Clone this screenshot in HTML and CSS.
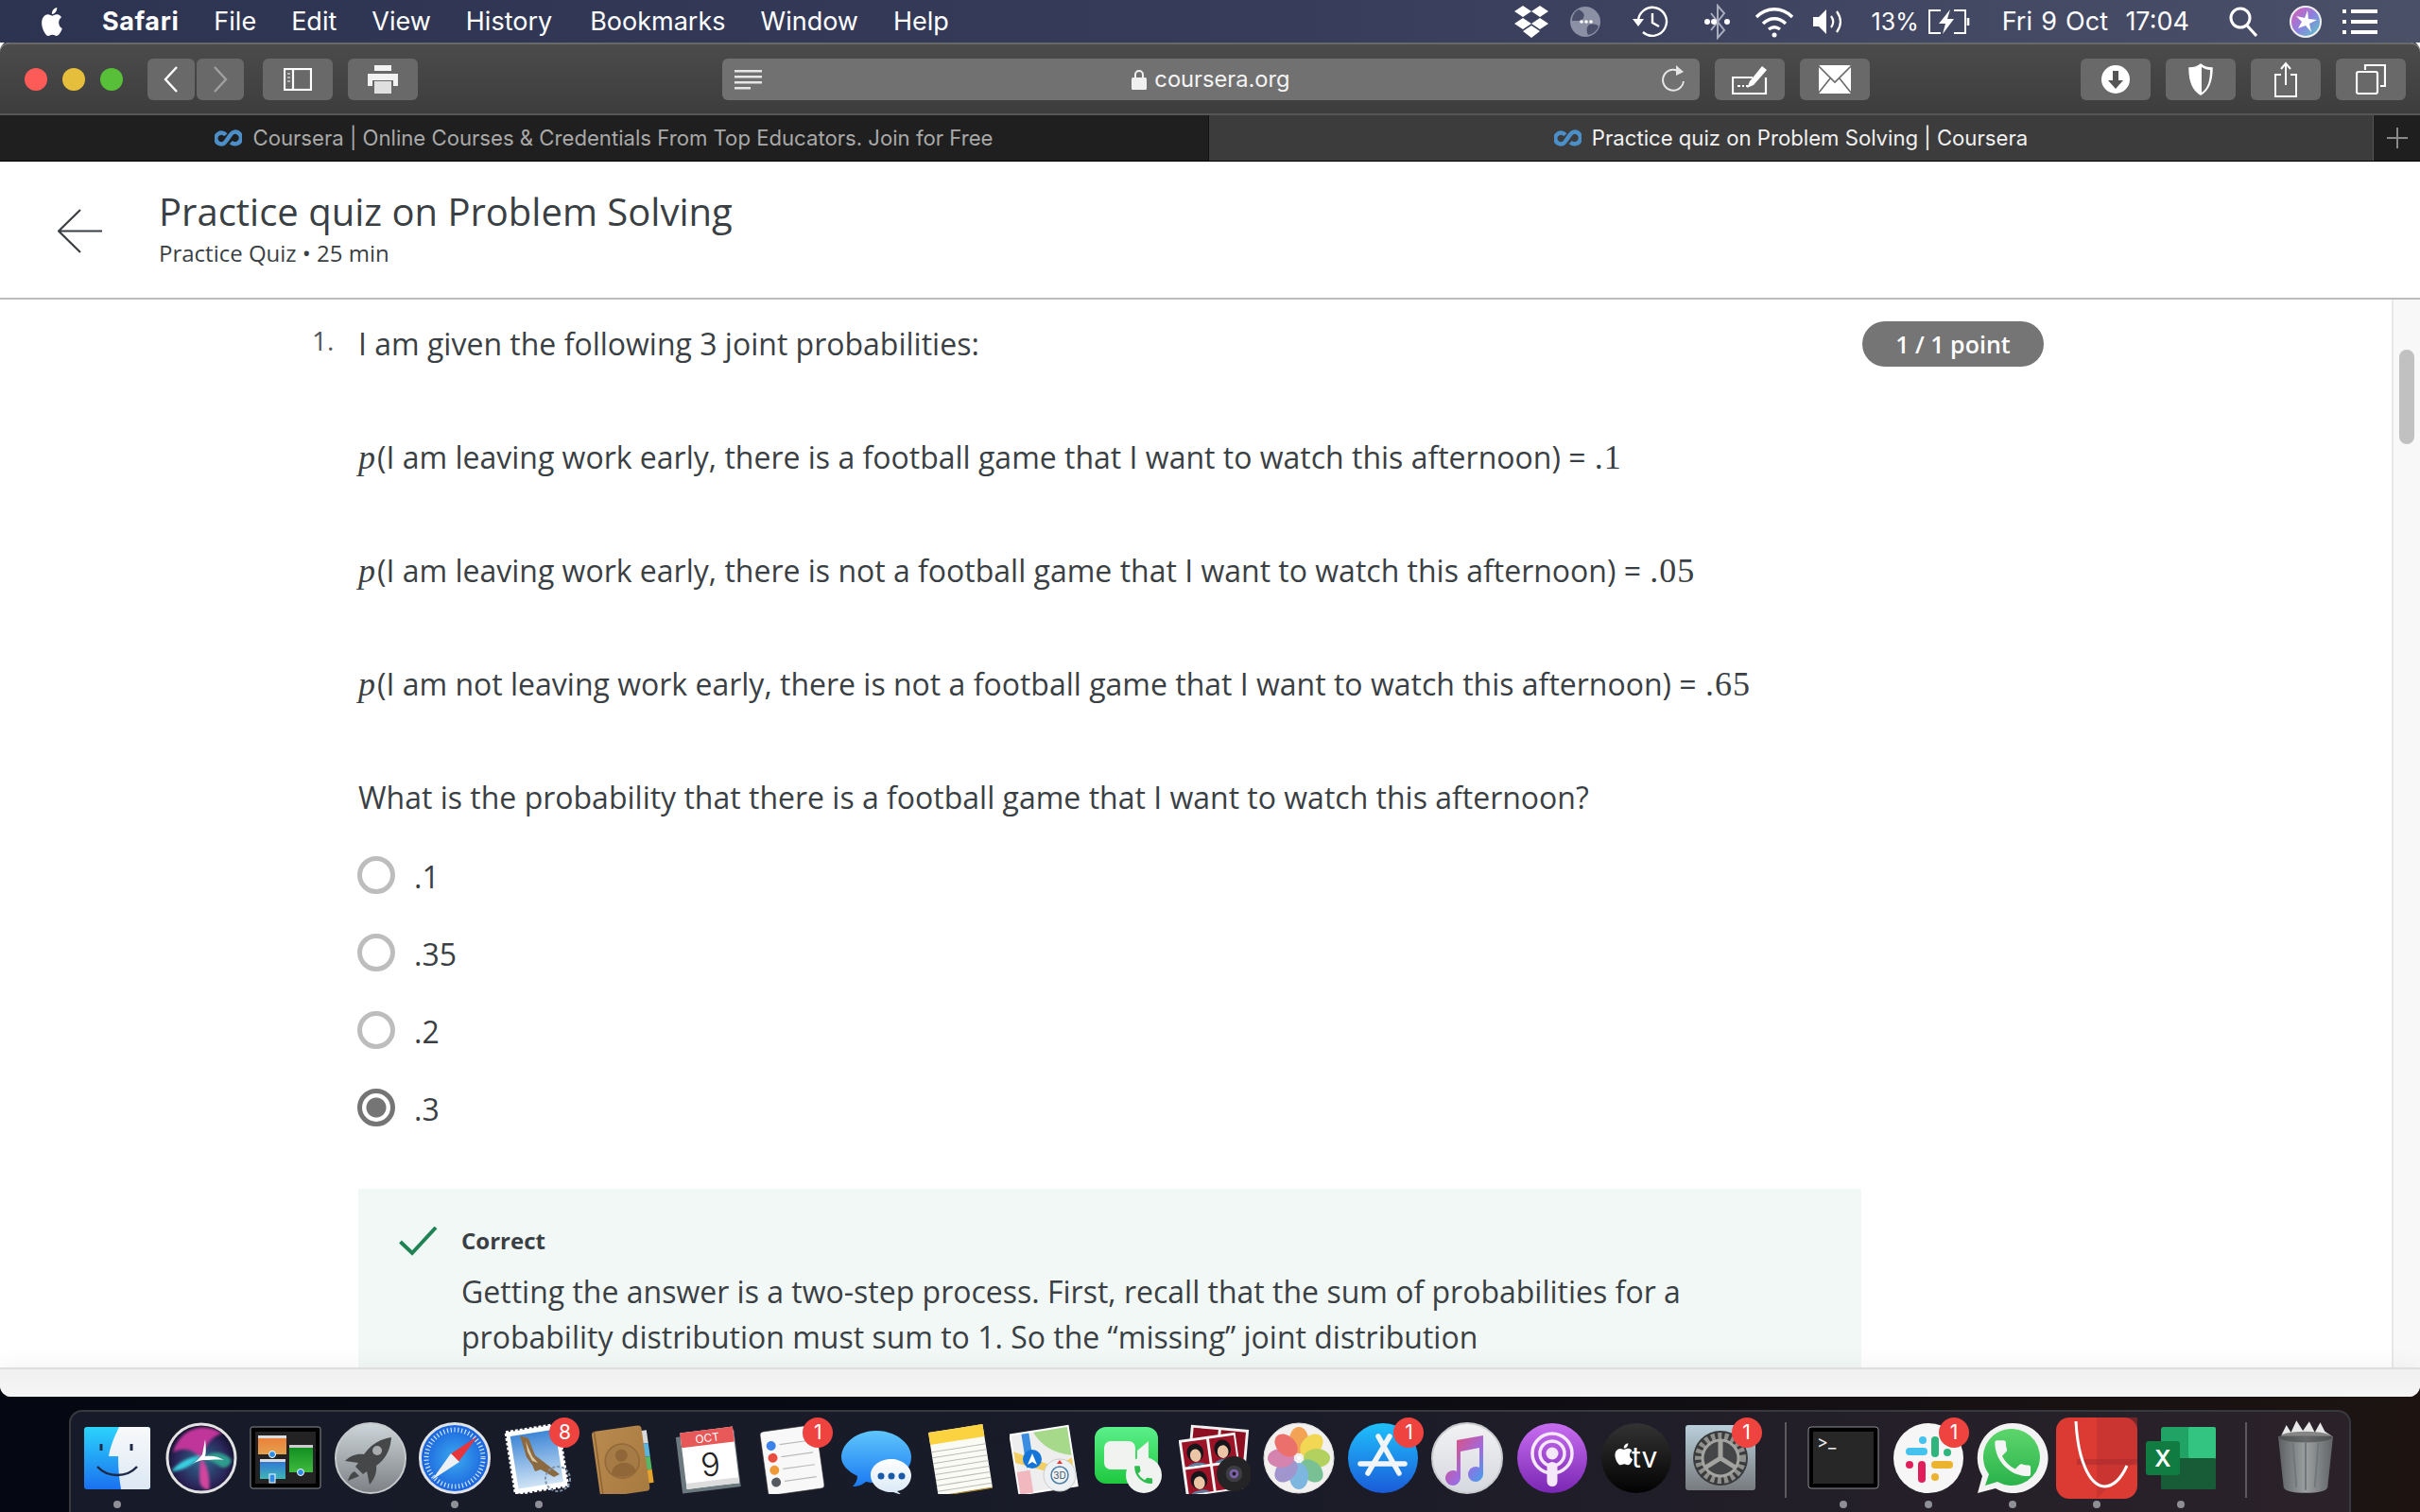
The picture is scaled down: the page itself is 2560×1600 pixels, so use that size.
FILE: index.html
```html
<!DOCTYPE html>
<html lang="en">
<head>
  <meta charset="UTF-8">
  <title>Practice quiz on Problem Solving | Coursera</title>
  <link rel="stylesheet" href="styles.css">
</head>
<body>
  <!-- mac menu bar -->
  <header class="menubar">
    <svg class="apple" viewBox="0 0 24 24" width="32" height="36" preserveAspectRatio="none"><path fill="#fff" d="M18.71 19.5c-.83 1.24-1.71 2.45-3.05 2.47-1.34.03-1.77-.79-3.29-.79-1.53 0-2 .77-3.27.82-1.31.05-2.3-1.32-3.14-2.53C4.25 17 2.94 12.45 4.7 9.39c.87-1.52 2.43-2.48 4.12-2.51 1.28-.02 2.5.87 3.29.87.78 0 2.26-1.07 3.81-.91.65.03 2.47.26 3.64 1.98-.09.06-2.17 1.28-2.15 3.81.03 3.02 2.65 4.03 2.68 4.04-.03.07-.42 1.44-1.38 2.83M13 3.5c.73-.83 1.94-1.46 2.94-1.5.13 1.17-.34 2.35-1.04 3.19-.69.85-1.83 1.51-2.95 1.42-.15-1.15.41-2.35 1.05-3.11z"/></svg>
    <nav class="menus">
      <b>Safari</b><span>File</span><span>Edit</span><span>View</span><span class="m-history">History</span><span>Bookmarks</span><span>Window</span><span>Help</span>
    </nav>
    <div class="status">
      <svg class="st-dropbox" viewBox="0 0 38 36" width="38" height="36"><path fill="#fff" d="M10 1l9 6-9 6-9-6zM28 1l9 6-9 6-9-6zM10 14l9 6-9 6-9-6zM28 14l9 6-9 6-9-6zM19 22l9 6-9 7-9-7z"/></svg>
      <svg class="st-globe" viewBox="0 0 32 32" width="32" height="32"><circle cx="16" cy="16" r="16" fill="#8b90a4"/><path fill="#4a506a" d="M9 3c5 3 7 5 5 9s-8 3-12 3c0-5 3-10 7-12zM20 19c6-1 9 0 10 2-2 5-6 8-11 9-2-4-2-8 1-11z"/><circle cx="12" cy="16" r="1.800" fill="#fff"/><circle cx="17" cy="16" r="1.800" fill="#fff"/><circle cx="22" cy="16" r="1.800" fill="#fff"/></svg>
      <svg class="st-time" viewBox="0 0 39 36" width="39" height="36" fill="none" stroke="#fff" stroke-width="2.4"><path d="M6 18a15 15 0 1 1 5 11"/><path d="M21 9v10l7 4"/><path fill="#fff" stroke="none" d="M0 15h12l-6 8z"/></svg>
      <svg class="st-bt" viewBox="0 0 27 38" width="27" height="38" fill="none" stroke="#a8acbc" stroke-width="2"><path d="M7 10l14 18-7 8V2l7 8L7 28"/><g fill="#fff" stroke="none"><circle cx="3" cy="19" r="3"/><circle cx="10" cy="19" r="3"/><circle cx="24" cy="19" r="3"/></g></svg>
      <svg class="st-wifi" viewBox="0 0 42 34" width="42" height="34" fill="none" stroke="#fff" stroke-width="3.4"><path d="M2 12c11-11 27-11 38 0"/><path d="M9 19c7-7 17-7 24 0"/><path d="M15 25c4-3 8-3 12 0"/><circle cx="21" cy="31" r="2.5" fill="#fff" stroke="none"/></svg>
      <svg class="st-vol" viewBox="0 0 34 30" width="34" height="30"><path fill="#fff" d="M0 10h6l8-8v26l-8-8H0z"/><path fill="none" stroke="#fff" stroke-width="2.2" d="M19 9c3 4 3 8 0 12M25 4c5 7 5 15 0 22"/></svg>
      <span class="st-pct">13%</span>
      <svg class="st-batt" viewBox="0 0 46 28" width="46" height="28" fill="none" stroke="#fff" stroke-width="2"><path d="M14 2H2v24h12M28 2h12v24H28"/><path d="M43 10v8" stroke-width="2.6"/><path fill="#fff" stroke="none" d="M24 1L12 16h7l-3 11 12-16h-7z"/></svg>
      <span class="st-date">Fri 9 Oct&nbsp; 17:04</span>
      <svg class="st-search" viewBox="0 0 30 32" width="30" height="32" fill="none" stroke="#fff" stroke-width="3"><circle cx="12" cy="12" r="10"/><path d="M19 20l10 11"/></svg>
      <svg class="st-siri" viewBox="0 0 34 34" width="34" height="34"><defs><linearGradient id="sb" x1="0" y1="0" x2="1" y2="1"><stop offset="0" stop-color="#e05bb0"/><stop offset=".5" stop-color="#8d7fe0"/><stop offset="1" stop-color="#53cdbf"/></linearGradient></defs><circle cx="17" cy="17" r="16" fill="url(#sb)" stroke="#eee" stroke-width="2"/><path fill="#fff" d="M19 5l1 9 9 1-8 4 2 9-6-7-8 3 4-7-6-6 9 2z"/></svg>
      <svg class="st-list" viewBox="0 0 37 26" width="37" height="26" fill="#fff"><path d="M0 0h4v4H0zM9 0h28v4H9zM0 11h4v4H0zM9 11h28v4H9zM0 22h4v4H0zM9 22h28v4H9z"/></svg>
    </div>
  </header>

  <div class="window">
    <div class="toolbar">
      <div class="lights"><i class="red"></i><i class="yellow"></i><i class="green"></i></div>
      <div class="btn nav-btn nav-back"><svg viewBox="0 0 16 28" width="16" height="28" fill="none" stroke="#fff" stroke-width="2.4"><path d="M14 1L2 14l12 13"/></svg></div>
      <div class="btn nav-btn nav-fwd"><svg viewBox="0 0 16 28" width="16" height="28" fill="none" stroke="#a0a0a0" stroke-width="2.4"><path d="M2 1l12 13L2 27"/></svg></div>
      <div class="btn btn-sidebar"><svg viewBox="0 0 30 24" width="30" height="24" fill="none" stroke="#fff" stroke-width="2.2"><rect x="1" y="1" width="28" height="22"/><path d="M10 1v22"/><path d="M4 6h3M4 10h3M4 14h3" stroke="#ccc" stroke-width="1.6"/></svg></div>
      <div class="btn btn-print"><svg viewBox="0 0 38 30" width="38" height="30"><path fill="#f2f2f2" d="M10 0h18v6H10zM3 9h32v13h-5v-6H8v6H3z"/><path fill="#e0e0e0" d="M10 17h18v13H10z"/></svg></div>
      <div class="address">
        <svg viewBox="0 0 30 22" width="30" height="22" fill="#e6e6e6"><path d="M1 1h29v2.4H1zM1 7h29v2.4H1zM1 13h29v2.4H1zM1 19h17v2.4H1z"/></svg>
        <div class="addr-url">
          <svg viewBox="0 0 16 22" width="16" height="22"><path fill="none" stroke="#f0f0f0" stroke-width="2" d="M4 9V6a4 4 0 0 1 8 0v3"/><rect y="9" width="16" height="13" rx="1.5" fill="#f0f0f0"/></svg>
          <span>coursera.org</span>
        </div>
        <svg viewBox="0 0 30 30" width="30" height="30" fill="none" stroke="#e6e6e6" stroke-width="2"><path d="M22 8a11 11 0 1 0 3 9"/><path fill="#e6e6e6" stroke="none" d="M17 0l8 7-8 4z"/></svg>
      </div>
      <div class="btn btn-compose"><svg viewBox="0 0 38 32" width="38" height="32" fill="none" stroke="#fff" stroke-width="2.2"><path d="M22 14H1v17h35V14"/><path d="M6 23h3M11 23h2M15 23h2" stroke-width="2"/><path fill="#fff" stroke="none" d="M32 2l5 4-14 16-7 3 3-7z"/></svg></div>
      <div class="btn btn-mail"><svg viewBox="0 0 34 30" width="34" height="30"><rect width="34" height="30" rx="1.5" fill="#fff"/><path fill="none" stroke="#6a6a6a" stroke-width="1.6" d="M0 1l17 17L34 1M0 29l12-15M34 29L22 14"/></svg></div>
      <div class="btn btn-dl"><svg viewBox="0 0 30 30" width="30" height="30"><circle cx="15" cy="15" r="15" fill="#fff"/><path fill="#555" d="M12 6h6v10h5l-8 9-8-9h5z"/></svg></div>
      <div class="btn"><svg viewBox="0 0 26 34" width="26" height="34"><path fill="#fff" stroke="#fff" stroke-width="1.5" d="M13 1c4 3 8 4 12 4 0 13-3 23-12 28C4 28 1 18 1 5c4 0 8-1 12-4z"/><path fill="#6a6a6a" d="M14 4c3 2 6 3 9 3 0 11-2 19-9 24z"/></svg></div>
      <div class="btn"><svg viewBox="0 0 24 38" width="24" height="38" fill="none" stroke="#fff" stroke-width="2"><path d="M7 14H1v23h22V14h-6"/><path d="M12 25V2M7 8l5-6 5 6"/></svg></div>
      <div class="btn"><svg viewBox="0 0 32 32" width="32" height="32" fill="none" stroke="#fff" stroke-width="2.2"><path d="M10 6V1h21v22h-5"/><rect x="1" y="8" width="22" height="23" rx="2"/></svg></div>
    </div>

    <div class="tabs">
      <div class="tab">
        <svg class="cs-logo" viewBox="0 0 32 20" width="29" height="20"><path fill="none" stroke="#4b8ec8" stroke-width="5" d="M13 6.500A6.500 6.500 0 1 0 9 17C14 17 18 3 23 3a7 7 0 1 1-4 12"/></svg>
        <span>Coursera | Online Courses &amp; Credentials From Top Educators. Join for Free</span>
      </div>
      <div class="tab tab-active">
        <svg class="cs-logo" viewBox="0 0 32 20" width="29" height="20"><path fill="none" stroke="#4b8ec8" stroke-width="5" d="M13 6.500A6.500 6.500 0 1 0 9 17C14 17 18 3 23 3a7 7 0 1 1-4 12"/></svg>
        <span>Practice quiz on Problem Solving | Coursera</span>
      </div>
      <div class="tab-add"><svg viewBox="0 0 24 24" width="24" height="24" stroke="#8a8a8a" stroke-width="2"><path d="M12 1v22M1 12h22"/></svg></div>
    </div>

    <div class="page-head">
      <svg class="back-arrow" viewBox="0 0 47 47" width="47" height="47" fill="none" stroke="#3a3f44" stroke-width="2.2"><path d="M24 1L1 23.500 24 46M1 23.500h46"/></svg>
      <div>
        <h1>Practice quiz on Problem Solving</h1>
        <p class="sub">Practice Quiz • 25 min</p>
      </div>
    </div>

    <main class="page-body">
      <div class="quiz">
        <div class="q-head">
          <span class="q-num">1.</span>
          <p class="line">I am given the following 3 joint probabilities:</p>
          <span class="pill">1 / 1 point</span>
        </div>
        <div class="q-body">
          <p class="line"><i class="math">p</i>(I am leaving work early, there is a football game that I want to watch this afternoon) = <span class="num">.1</span></p>
          <p class="line"><i class="math">p</i>(I am leaving work early, there is not a football game that I want to watch this afternoon) = <span class="num">.05</span></p>
          <p class="line"><i class="math">p</i>(I am not leaving work early, there is not a football game that I want to watch this afternoon) = <span class="num">.65</span></p>
          <p class="line">What is the probability that there is a football game that I want to watch this afternoon?</p>

          <ul class="options">
            <li><span class="radio"></span>.1</li>
            <li><span class="radio"></span>.35</li>
            <li><span class="radio"></span>.2</li>
            <li><span class="radio checked"></span>.3</li>
          </ul>

          <div class="feedback">
            <svg class="check" viewBox="0 0 41 31" width="41" height="31" fill="none" stroke="#1f8354" stroke-width="4"><path d="M1.500 16L14 28 39 1"/></svg>
            <div>
              <h3>Correct</h3>
              <p>Getting the answer is a two-step process. First, recall that the sum of probabilities for a probability distribution must sum to 1. So the “missing” joint distribution</p>
            </div>
          </div>
        </div>
      </div>
      <div class="scrollbar"><div class="thumb"></div></div>
    </main>
    <div class="win-foot"></div>
  </div>

  <!-- dock -->
  <footer class="dock">
    <div class="dock-item on">
      <svg viewBox="0 0 76 76"><defs><linearGradient id="fa" x1="0" y1="0" x2="0" y2="1"><stop offset="0" stop-color="#2bd3fc"/><stop offset="1" stop-color="#1b70ef"/></linearGradient><linearGradient id="fb" x1="0" y1="0" x2="0" y2="1"><stop offset="0" stop-color="#f8f9fa"/><stop offset="1" stop-color="#dce8f4"/></linearGradient></defs><rect x="3" y="5" width="70" height="66" rx="3" fill="url(#fa)"/><path fill="url(#fb)" d="M40 5C34 17 30 28 29 36h10c0 12 1 24 3 35h28a3 3 0 0 0 3-3V8a3 3 0 0 0-3-3z"/><path fill="none" stroke="#1d2a48" stroke-width="3" d="M21 23v7M53 23v7"/><path fill="none" stroke="#1d2a48" stroke-width="2.500" d="M17 47c11 12 31 12 42 0"/></svg>
    </div>
    <div class="dock-item">
      <svg viewBox="0 0 76 76"><defs><radialGradient id="sa" cx=".5" cy=".55" r=".55"><stop offset="0" stop-color="#2e6a8e"/><stop offset=".7" stop-color="#2a2458"/><stop offset="1" stop-color="#0c0d20"/></radialGradient><filter id="sblur"><feGaussianBlur stdDeviation="1.600"/></filter><clipPath id="sclip"><circle cx="38" cy="38" r="34"/></clipPath></defs><circle cx="38" cy="38" r="36" fill="url(#sa)" stroke="#e2e2e2" stroke-width="3"/><g clip-path="url(#sclip)" filter="url(#sblur)"><path fill="#c0349a" d="M8 32C14 8 40 -2 60 12c-10 2-18 12-22 26C28 28 18 26 8 32z"/><path fill="#2d9c8e" d="M40 38c8-8 22-8 30 2-2 8-8 9-12 7-6-4-12-7-18-9z"/><path fill="#d1449e" d="M38 38c6 6 10 22 8 34-8-2-10-6-10-14 0-8 0-14 2-20z"/><path fill="#38d0e0" d="M6 52c8-10 20-16 32-16-6 6-18 16-32 16z"/></g><path fill="#fff" d="M42 18c1 8 1 14 0 18 6-1 14 0 20 4-7-1-14 0-20 0-4 0-10 1-16 6 4-3 10-7 13-12 1-5 2-10 3-16z"/></svg>
    </div>
    <div class="dock-item">
      <svg viewBox="0 0 76 76"><defs><linearGradient id="ma" x1="0" y1="0" x2="0" y2="1"><stop offset="0" stop-color="#ec7b3a"/><stop offset="1" stop-color="#e3a14b"/></linearGradient><linearGradient id="mb" x1="0" y1="0" x2="0" y2="1"><stop offset="0" stop-color="#0d8a1e"/><stop offset="1" stop-color="#3fbb3f"/></linearGradient><linearGradient id="mc" x1="0" y1="0" x2="0" y2="1"><stop offset="0" stop-color="#2f6edb"/><stop offset="1" stop-color="#3fb6b5"/></linearGradient></defs><rect x="1" y="5" width="74" height="65" rx="2" fill="#000" stroke="#8a8f96"/><rect x="6" y="10" width="64" height="55" fill="#232323"/><rect x="9" y="14" width="30" height="20" fill="url(#ma)"/><rect x="9" y="14" width="30" height="3" fill="#ddd"/><rect x="42" y="24" width="25" height="29" fill="url(#mb)"/><rect x="42" y="24" width="25" height="3" fill="#ccc"/><rect x="11" y="39" width="27" height="21" fill="url(#mc)"/><rect x="11" y="39" width="27" height="3" fill="#ddd"/><circle cx="24" cy="34" r="3.500" fill="#2f8de4" stroke="#fff"/><circle cx="54" cy="53" r="3.500" fill="#2f8de4" stroke="#fff"/><rect x="21" y="55" width="6" height="9" fill="#2f8de4" stroke="#fff"/></svg>
    </div>
    <div class="dock-item">
      <svg viewBox="0 0 76 76"><defs><linearGradient id="la" x1="0" y1="0" x2="0" y2="1"><stop offset="0" stop-color="#cdd6da"/><stop offset="1" stop-color="#7d8084"/></linearGradient></defs><circle cx="38" cy="38" r="37" fill="url(#la)" stroke="#c6c8ca" stroke-width="2"/><path fill="#454749" d="M60 16c-13 2-22 8-29 18-7-1-14 1-20 7l14 2-3 4 8 8 4-3 3 14c5-6 8-13 7-20 10-7 15-17 16-30z"/><path fill="#454749" d="M21 52l5 5-12 5c1-4 3-8 7-10z"/><circle cx="45" cy="30" r="5" fill="#a9acae"/></svg>
    </div>
    <div class="dock-item on">
      <svg viewBox="0 0 76 76"><defs><radialGradient id="sf" cx=".5" cy=".5" r=".5"><stop offset="0" stop-color="#3ba9f0"/><stop offset="1" stop-color="#1a61dc"/></radialGradient></defs><circle cx="38" cy="38" r="36.500" fill="url(#sf)" stroke="#e0e3e6" stroke-width="3"/><circle cx="38" cy="38" r="30" fill="none" stroke="#cfe6fb" stroke-width="5" stroke-dasharray="1.200 2.600"/><path fill="#e8353b" d="M62 15L33 34l9 8z"/><path fill="#eef1f3" d="M14 61l29-19-9-9z"/></svg>
    </div>
    <div class="dock-item on">
      <svg viewBox="0 0 76 76"><defs><linearGradient id="ms" x1="0" y1="0" x2="0" y2="1"><stop offset="0" stop-color="#3f87d6"/><stop offset="1" stop-color="#cfe3f5"/></linearGradient></defs><g transform="rotate(-9 36 40)"><rect x="8" y="6" width="56" height="66" fill="#fff" stroke="#fff" stroke-width="3" stroke-dasharray="3 2"/><rect x="12" y="11" width="48" height="56" fill="url(#ms)"/></g><path fill="#8b6a42" d="M18 14l9 3 7 18 26 20-6 3-14-8-6 2-3-7-6-8z"/><path fill="#d8c6a4" d="M24 20l7 16 6 7-6-2-5-10z"/><circle cx="58" cy="60" r="13" fill="none" stroke="#7e93a9" stroke-width="2" stroke-dasharray="3 2"/></svg>
      <span class="badge">8</span>
    </div>
    <div class="dock-item">
      <svg viewBox="0 0 76 76"><defs><linearGradient id="ca" x1="0" y1="0" x2="1" y2="1"><stop offset="0" stop-color="#b98a50"/><stop offset="1" stop-color="#a77a40"/></linearGradient></defs><g transform="rotate(-8 38 40)"><rect x="60" y="12" width="7" height="14" fill="#d8d8d8"/><rect x="60" y="26" width="7" height="14" fill="#5bb4dd"/><rect x="60" y="40" width="7" height="14" fill="#57b566"/><rect x="60" y="54" width="7" height="14" fill="#e5a32c"/><rect x="9" y="6" width="53" height="70" rx="4" fill="url(#ca)"/><path stroke="#8d6431" stroke-width="1.500" d="M12 6v70"/><circle cx="37" cy="41" r="18" fill="#a67b45" stroke="#93693a" stroke-width="1.500"/><circle cx="37" cy="35" r="6.500" fill="#8f6738"/><path fill="#8f6738" d="M24 53c2-8 8-10 13-10s11 2 13 10c-7 6-19 6-26 0z"/></g></svg>
    </div>
    <div class="dock-item">
      <svg viewBox="0 0 76 76"><g transform="rotate(-7 38 40)"><rect x="7" y="12" width="62" height="60" fill="#6c7a80"/><rect x="12" y="8" width="56" height="60" fill="#fff"/><rect x="12" y="8" width="56" height="16" fill="#e75858"/><rect x="12" y="62" width="56" height="6" fill="#ddd"/><text x="40" y="21" class="cal-mon">OCT</text><text x="40" y="57" class="cal-day">9</text></g></svg>
    </div>
    <div class="dock-item">
      <svg viewBox="0 0 76 76"><g transform="rotate(-8 38 40)"><rect x="8" y="6" width="60" height="68" rx="4" fill="#f8f8f8" stroke="#333" stroke-width=".6"/><circle cx="18" cy="22" r="5" fill="#3b82ea"/><circle cx="18" cy="35" r="5" fill="#e84e40"/><circle cx="18" cy="48" r="5" fill="#ef9a3a"/><circle cx="18" cy="61" r="5" fill="#555a60"/><path stroke="#bbb" stroke-width="1.200" d="M27 22h34M27 35h34M27 48h34M27 61h34"/></g></svg>
      <span class="badge">1</span>
    </div>
    <div class="dock-item">
      <svg viewBox="0 0 76 76"><defs><linearGradient id="ga" x1="0" y1="0" x2="0" y2="1"><stop offset="0" stop-color="#5fc6fb"/><stop offset="1" stop-color="#1a79f2"/></linearGradient><linearGradient id="gb" x1="0" y1="0" x2="0" y2="1"><stop offset="0" stop-color="#fff"/><stop offset="1" stop-color="#d8e8f6"/></linearGradient></defs><path fill="url(#ga)" d="M38 9c20 0 37 13 37 28S58 64 38 64c-4 0-7 0-11-1-3 3-9 5-14 5 3-3 5-7 5-11C8 52 1 45 1 37 1 22 18 9 38 9z"/><path fill="url(#gb)" d="M54 39c11 0 21 8 21 17S68 72 60 73l5 4-9-3c-1 0-1 0-2 0-12 0-22-8-22-18s10-17 22-17z"/><circle cx="43" cy="57" r="3.500" fill="#1a5aa6"/><circle cx="54" cy="57" r="3.500" fill="#1a5aa6"/><circle cx="65" cy="57" r="3.500" fill="#1a5aa6"/></svg>
    </div>
    <div class="dock-item">
      <svg viewBox="0 0 76 76"><g transform="rotate(-9 38 40)"><rect x="8" y="6" width="58" height="68" fill="#fbfbf6"/><rect x="8" y="6" width="58" height="13" fill="#fbd23f"/><path stroke="#bcbcb5" stroke-width="1" d="M8 27h58M8 33h58M8 39h58M8 45h58M8 51h58M8 57h58M8 63h58M8 69h58"/><path stroke="#b08a30" stroke-width="1.200" d="M8 74h58"/></g></svg>
    </div>
    <div class="dock-item">
      <svg viewBox="0 0 76 76"><g transform="rotate(-9 38 40)"><rect x="5" y="8" width="62" height="64" fill="#eee" stroke="#fff" stroke-width="2"/><path fill="#a6d98a" d="M30 9h36v30C52 36 36 26 30 9z"/><path fill="#f2b8c0" d="M6 48h14v24H6z"/><path fill="#f3cf63" d="M6 26l40 22 20-6v10l-20 4L6 38z"/><rect x="17" y="9" width="8" height="36" fill="#3a8de0"/></g><circle cx="24" cy="39" r="10" fill="#1675d8"/><path fill="#fff" d="M24 33l5 12-5-3-5 3z"/><circle cx="53" cy="56" r="17" fill="#eef1f3" stroke="#ccc"/><circle cx="53" cy="56" r="9" fill="none" stroke="#4b7fa5" stroke-width="1.500"/><text x="53" y="60" class="map-3d">3D</text><path fill="#e33" d="M53 40l3 4h-6z"/></svg>
    </div>
    <div class="dock-item">
      <svg viewBox="0 0 76 76"><defs><linearGradient id="ft" x1="0" y1="0" x2="0" y2="1"><stop offset="0" stop-color="#5bf08a"/><stop offset="1" stop-color="#1fc83f"/></linearGradient></defs><rect x="1" y="5" width="67" height="60" rx="12" fill="url(#ft)"/><rect x="11" y="20" width="33" height="30" rx="7" fill="#f1f3f0"/><path fill="#f1f3f0" d="M46 30l12-10v30L46 40z"/><circle cx="53" cy="56" r="19" fill="#f0f3ef"/><path fill="#2ebd4d" transform="translate(40 43) scale(1.050)" d="M6.620 10.790c1.440 2.830 3.760 5.140 6.590 6.590l2.200-2.200c.27-.27.67-.36 1.020-.24 1.120.37 2.330.57 3.570.57.55 0 1 .45 1 1V20c0 .55-.45 1-1 1-9.390 0-17-7.610-17-17 0-.55.45-1 1-1h3.500c.55 0 1 .45 1 1 0 1.250.2 2.450.57 3.570.11.35.03.74-.25 1.020l-2.200 2.200z"/></svg>
    </div>
    <div class="dock-item">
      <svg viewBox="0 0 78 76"><g transform="rotate(5 50 30)"><rect x="11" y="5" width="63" height="45" fill="#f2f2f2"/><rect x="14" y="8" width="27" height="35" fill="#8f0f22"/><rect x="44" y="8" width="27" height="35" fill="#8f0f22"/></g><g transform="rotate(-8 34 40)"><rect x="3" y="14" width="62" height="62" fill="#f5f5f5"/><rect x="6" y="17" width="27" height="27" fill="#9c1327"/><rect x="36" y="17" width="27" height="27" fill="#9c1327"/><rect x="6" y="47" width="27" height="27" fill="#9c1327"/><rect x="36" y="47" width="27" height="27" fill="#9c1327"/><ellipse cx="19" cy="30" rx="9" ry="10" fill="#16161a"/><ellipse cx="19" cy="33" rx="6" ry="7" fill="#ecc4a6"/><path fill="#5a7fa0" d="M9 44c2-4 18-4 20 0z"/><ellipse cx="49" cy="30" rx="9" ry="10" fill="#16161a"/><ellipse cx="49" cy="33" rx="6" ry="7" fill="#ecc4a6"/><path fill="#5a7fa0" d="M39 44c2-4 18-4 20 0z"/><ellipse cx="19" cy="60" rx="9" ry="10" fill="#16161a"/><ellipse cx="19" cy="63" rx="6" ry="7" fill="#ecc4a6"/><path fill="#5a7fa0" d="M9 74c2-4 18-4 20 0z"/></g><circle cx="60" cy="55" r="19" fill="#242426"/><circle cx="60" cy="55" r="9" fill="#3d3d44"/><circle cx="60" cy="55" r="5" fill="#7b62a6"/><circle cx="60" cy="55" r="2" fill="#1c1c22"/></svg>
    </div>
    <div class="dock-item">
      <svg viewBox="0 0 76 76"><circle cx="38" cy="38" r="37" fill="#f2f1ef" stroke="#ddd"/><g opacity=".85"><ellipse cx="38" cy="19" rx="10" ry="14" fill="#f3963a"/><ellipse cx="38" cy="19" rx="10" ry="14" fill="#f3d33a" transform="rotate(45 38 38)"/><ellipse cx="38" cy="19" rx="10" ry="14" fill="#a9cc46" transform="rotate(90 38 38)"/><ellipse cx="38" cy="19" rx="10" ry="14" fill="#64b985" transform="rotate(135 38 38)"/><ellipse cx="38" cy="19" rx="10" ry="14" fill="#69aede" transform="rotate(180 38 38)"/><ellipse cx="38" cy="19" rx="10" ry="14" fill="#9286c8" transform="rotate(225 38 38)"/><ellipse cx="38" cy="19" rx="10" ry="14" fill="#cf72a4" transform="rotate(270 38 38)"/><ellipse cx="38" cy="19" rx="10" ry="14" fill="#ea5a56" transform="rotate(315 38 38)"/></g><circle cx="38" cy="38" r="2" fill="#fff"/></svg>
    </div>
    <div class="dock-item">
      <svg viewBox="0 0 76 76"><defs><linearGradient id="ap" x1="0" y1="0" x2="0" y2="1"><stop offset="0" stop-color="#1fc0fb"/><stop offset="1" stop-color="#1a5bd8"/></linearGradient></defs><circle cx="38" cy="38" r="37" fill="url(#ap)"/><g stroke="#f2f5f8" stroke-width="5.500" stroke-linecap="round" fill="none"><path d="M45 15L22 54"/><path d="M33 15l22 39"/><path d="M14 44h47"/></g></svg>
      <span class="badge">1</span>
    </div>
    <div class="dock-item">
      <svg viewBox="0 0 76 76"><defs><linearGradient id="mu" x1="0" y1="0" x2="0" y2="1"><stop offset="0" stop-color="#f2f2f4"/><stop offset="1" stop-color="#d5d8de"/></linearGradient><linearGradient id="mn" x1="0" y1="0" x2="1" y2="1"><stop offset="0" stop-color="#f2485f"/><stop offset=".6" stop-color="#9f6ae0"/><stop offset="1" stop-color="#36a8ee"/></linearGradient></defs><circle cx="38" cy="38" r="37" fill="url(#mu)" stroke="#c8cacd" stroke-width="2"/><path fill="url(#mn)" d="M27 19l28-5v41a8 8 0 1 1-4-7V27l-20 4v28a8 8 0 1 1-4-7z"/></svg>
    </div>
    <div class="dock-item">
      <svg viewBox="0 0 76 76"><defs><linearGradient id="po" x1="0" y1="0" x2="0" y2="1"><stop offset="0" stop-color="#c86df0"/><stop offset="1" stop-color="#7a27b4"/></linearGradient></defs><circle cx="38" cy="38" r="37" fill="url(#po)"/><g fill="none" stroke="#f4e8fa" stroke-width="3.500"><circle cx="38" cy="33" r="21"/><circle cx="38" cy="33" r="13"/></g><circle cx="38" cy="33" r="6.500" fill="#f4e8fa"/><rect x="32.500" y="42" width="11" height="26" rx="5.500" fill="#f4e8fa"/></svg>
    </div>
    <div class="dock-item">
      <svg viewBox="0 0 76 76"><defs><linearGradient id="tv" x1="0" y1="0" x2="0" y2="1"><stop offset="0" stop-color="#333"/><stop offset="1" stop-color="#020202"/></linearGradient></defs><circle cx="38" cy="38" r="37" fill="url(#tv)"/><path fill="#fff" transform="translate(11 20) scale(1.150)" d="M18.710 19.500c-.83 1.240-1.710 2.450-3.050 2.470-1.340.03-1.770-.79-3.290-.79-1.530 0-2 .77-3.270.82-1.310.05-2.300-1.320-3.140-2.530C4.250 17 2.940 12.450 4.700 9.390c.87-1.520 2.430-2.480 4.120-2.510 1.280-.02 2.500.87 3.290.87.78 0 2.260-1.070 3.810-.91.65.03 2.470.26 3.640 1.980-.09.06-2.170 1.280-2.150 3.810.03 3.020 2.650 4.030 2.680 4.040-.03.07-.42 1.440-1.380 2.830M13 3.500c.73-.83 1.940-1.460 2.940-1.500.13 1.170-.34 2.350-1.040 3.190-.69.85-1.830 1.510-2.950 1.420-.15-1.150.41-2.350 1.050-3.110z"/><text x="33" y="48" class="tv-text">tv</text></svg>
    </div>
    <div class="dock-item">
      <svg viewBox="0 0 76 76"><defs><linearGradient id="sy" x1="0" y1="0" x2="0" y2="1"><stop offset="0" stop-color="#b9cfdb"/><stop offset="1" stop-color="#777b7e"/></linearGradient></defs><rect x="1" y="3" width="74" height="69" rx="3" fill="url(#sy)"/><circle cx="38" cy="38" r="29" fill="#3a3b3d"/><circle cx="38" cy="38" r="23" fill="none" stroke="#8f8f8c" stroke-width="8" stroke-dasharray="4 3"/><circle cx="38" cy="38" r="19" fill="#444547" stroke="#a3a3a0" stroke-width="3"/><path stroke="#a3a3a0" stroke-width="5" d="M38 38V19M38 38L22 48M38 38l16 10"/></svg>
      <span class="badge">1</span>
    </div>
    <div class="dock-sep"></div>
    <div class="dock-item on">
      <svg viewBox="0 0 76 76"><rect x="1" y="5" width="74" height="65" rx="3" fill="#000" stroke="#8c9094"/><rect x="6" y="10" width="64" height="55" fill="#272727"/><text x="10" y="27" class="term-text">&gt;_</text></svg>
    </div>
    <div class="dock-item on">
      <svg viewBox="0 0 76 76"><circle cx="38" cy="38" r="37" fill="#f6f6f6"/><g stroke-width="8" stroke-linecap="round"><path stroke="#45c3ee" d="M18 31h15"/><path stroke="#45c3ee" d="M32 19h0"/><path stroke="#2eb57e" d="M45 19v14"/><path stroke="#2eb57e" d="M58 32h0"/><path stroke="#ecb32e" d="M45 45h15"/><path stroke="#ecb32e" d="M45 58h0"/><path stroke="#e01e5a" d="M31 45v15"/><path stroke="#e01e5a" d="M18 45h0"/></g></svg>
      <span class="badge">1</span>
    </div>
    <div class="dock-item on">
      <svg viewBox="0 0 76 76"><defs><linearGradient id="wa" x1="0" y1="0" x2="0" y2="1"><stop offset="0" stop-color="#5dd66c"/><stop offset="1" stop-color="#2ab24b"/></linearGradient></defs><path fill="#f3f3f3" d="M38 1a37 37 0 1 1-18 69L1 75l5-18A37 37 0 0 1 38 1z"/><path fill="url(#wa)" d="M38 7a30 30 0 1 1-16 56L9 67l4-12A30 30 0 0 1 38 7z"/><path fill="#f5f5f5" transform="translate(13 13) scale(2.100)" d="M6.620 10.790c1.440 2.830 3.760 5.140 6.590 6.590l2.200-2.200c.27-.27.67-.36 1.020-.24 1.120.37 2.330.57 3.570.57.55 0 1 .45 1 1V20c0 .55-.45 1-1 1-9.390 0-17-7.610-17-17 0-.55.45-1 1-1h3.500c.55 0 1 .45 1 1 0 1.250.2 2.450.57 3.570.11.35.03.74-.25 1.020l-2.200 2.200z"/></svg>
    </div>
    <div class="dock-item on">
      <svg class="big" viewBox="0 0 86 86"><rect width="86" height="86" rx="14" fill="#dc3b33"/><path fill="#b72d2f" d="M43 0l43 0v44L43 86z" opacity=".5"/><path fill="#a32a2c" d="M22 44h64v6H22z" opacity=".5"/><path fill="none" stroke="#fff" stroke-width="3" d="M21 4c2 40 14 68 30 69 10 0 18-9 24-22"/></svg>
    </div>
    <div class="dock-item on">
      <svg viewBox="0 0 76 76"><rect x="17" y="5" width="58" height="66" rx="3" fill="#21a366"/><rect x="46" y="5" width="29" height="33" fill="#33c481" rx="2"/><rect x="17" y="38" width="58" height="33" fill="#185c37" rx="2"/><rect x="1" y="20" width="36" height="36" rx="3" fill="#107c41"/><text x="19" y="47" class="xl-text">X</text></svg>
    </div>
    <div class="dock-sep dock-sep-end"></div>
    <div class="dock-item">
      <svg class="trash" viewBox="0 0 64 80"><defs><linearGradient id="tr" x1="0" y1="0" x2="1" y2="0"><stop offset="0" stop-color="#5c6062"/><stop offset=".5" stop-color="#9ca0a1"/><stop offset="1" stop-color="#606466"/></linearGradient></defs><path fill="url(#tr)" d="M2 18h60l-6 56c-1 4-10 6-24 6S9 78 8 74z"/><path fill="#e8e8e8" d="M5 18l6-12 5 8 6-13 7 11 7-10 6 12 6-11 5 10 8 5H5z"/><ellipse cx="32" cy="19" rx="29" ry="6" fill="#444" opacity=".6"/><path stroke="#72777a" stroke-width="2" d="M18 24l4 50M32 25v52M46 24l-4 50"/></svg>
    </div>
  </footer>
</body>
</html>
```

FILE: styles.css
```css
* {
  box-sizing: border-box;
}
html, body {
  margin: 0;
  padding: 0;
}
body {
  width: 2560px;
  height: 1600px;
  overflow: hidden;
  font-family: "Open Sans", Arial, sans-serif;
  background: linear-gradient(90deg, #050812, #0a0b14 50%, #1d1412);
}
p, h1, h3, ul {
  margin: 0;
  padding: 0;
}

/* menu bar */
.menubar {
  height: 45px;
  display: flex;
  align-items: center;
  background: linear-gradient(90deg, #2d3452, #353b59 50%, #4b5069);
  color: #fff;
  font-family: Inter, Arial, sans-serif;
  font-size: 27px;
  padding-right: 45px;
}
.apple {
  margin-left: 39px;
}
.menus {
  display: flex;
  gap: 37px;
  margin-left: 37px;
}
.menus b {
  font-weight: 700;
  letter-spacing: .6px;
}
.m-history {
  margin-right: 3px;
}
.status {
  display: flex;
  align-items: center;
  margin-left: auto;
}
.st-globe { margin-left: 22px; }
.st-time { margin-left: 34px; }
.st-bt { margin-left: 37px; }
.st-wifi { margin-left: 26px; }
.st-vol { margin-left: 20px; }
.st-pct { margin-left: 28px; font-size: 25px; }
.st-batt { margin-left: 9px; }
.st-date { margin-left: 33px; word-spacing: 1.6px; }
.st-search { margin-left: 42px; }
.st-siri { margin-left: 34px; }
.st-list { margin-left: 22px; }

/* browser window */
.window {
  height: 1433px;
  display: flex;
  flex-direction: column;
  border-radius: 0 0 12px 12px;
  overflow: hidden;
  background: #fff;
}
.toolbar {
  height: 77px;
  flex: none;
  display: flex;
  align-items: center;
  padding-left: 26px;
  background: linear-gradient(#4b4b4b, #3d3d3d);
  border-top: 2px solid #686868;
  border-bottom: 2px solid #555;
  border-radius: 10px 10px 0 0;
  box-shadow: 0 -1px 0 #15171f;
}
.lights {
  display: flex;
  gap: 16px;
  margin-right: 26px;
}
.lights i {
  width: 24px;
  height: 24px;
  border-radius: 50%;
}
.red { background: #fc5b57; }
.yellow { background: #e5bf3c; }
.green { background: #57c038; }
.btn {
  width: 74px;
  height: 44px;
  margin-left: 16px;
  flex: none;
  display: flex;
  align-items: center;
  justify-content: center;
  border-radius: 6px;
  background: #696969;
}
.nav-btn {
  width: 50px;
  margin-left: 2px;
}
.nav-back {
  margin-left: 0;
}
.btn-sidebar {
  margin-left: 20px;
}
.address {
  width: 1034px;
  height: 44px;
  margin-left: 322px;
  flex: none;
  display: flex;
  align-items: center;
  justify-content: space-between;
  padding: 0 12px;
  border-radius: 6px;
  background: #717171;
}
.addr-url {
  display: flex;
  align-items: center;
  gap: 8px;
  color: #f4f4f4;
  font-family: Inter, Arial, sans-serif;
  font-size: 23.7px;
}
.btn-dl {
  margin-left: 223px;
}
.tabs {
  height: 49px;
  flex: none;
  display: flex;
  background: #1f1f1f;
  border-bottom: 1px solid #000;
}
.tab {
  width: 1278px;
  display: flex;
  align-items: center;
  justify-content: center;
  gap: 11px;
  color: #a9a9a9;
  font-family: Inter, Arial, sans-serif;
  font-size: 22.15px;
}
.tab-active {
  width: 1233px;
  background: #3c3c3c;
  color: #f2f2f2;
  border-left: 1px solid #111;
  border-right: 1px solid #555;
}
.tab-add {
  flex: 1;
  display: flex;
  align-items: center;
  justify-content: center;
}

/* coursera page */
.page-head {
  height: 146px;
  flex: none;
  display: flex;
  align-items: flex-start;
  padding: 26px 0 0 61px;
  border-bottom: 2px solid #bdbdbd;
  color: #3a3f44;
}
.back-arrow {
  margin: 24px 60px 0 0;
}
h1 {
  font-size: 40px;
  font-weight: 400;
  line-height: 54px;
}
.sub {
  font-size: 24px;
  line-height: 32px;
  margin-top: 1px;
}
.page-body {
  flex: 1;
  min-height: 0;
  display: flex;
  overflow: hidden;
  color: #3a3f44;
}
.quiz {
  flex: 1;
  padding: 23px 0 0 330px;
}
.q-head {
  display: flex;
  width: 1832px;
  align-items: flex-start;
}
.q-num {
  width: 49px;
  flex: none;
  font-size: 28px;
  line-height: 40px;
  color: #50555a;
}
.q-head .line {
  flex: 1;
}
.pill {
  width: 192px;
  height: 48px;
  flex: none;
  display: flex;
  align-items: center;
  justify-content: center;
  border-radius: 24px;
  background: #757575;
  color: #fff;
  font-size: 25px;
  font-weight: 600;
}
.q-body {
  width: 1590px;
  margin-left: 49px;
}
.line {
  font-size: 32px;
  line-height: 48px;
}
.q-body .line {
  margin-top: 72px;
}
.math, .num {
  font-family: "Liberation Serif", serif;
  font-size: 36px;
  line-height: 0;
}
.math {
  margin-right: 2px;
}
.num {
  letter-spacing: 1px;
  margin-left: 1px;
}
.options {
  list-style: none;
  margin-top: 17px;
}
.options li {
  height: 82px;
  padding-top: 2px;
  display: flex;
  align-items: center;
  gap: 20px;
  font-size: 32px;
}
.radio {
  width: 40px;
  height: 40px;
  margin: -2px 0 0 -1px;
  border: 5px solid #bdbdbd;
  border-radius: 50%;
  background: #fff;
}
.radio.checked {
  border-color: #757575;
  background: radial-gradient(circle, #757575 10px, #fff 11px);
}
.feedback {
  height: 300px;
  margin-top: 45px;
  display: flex;
  align-items: flex-start;
  gap: 25px;
  padding: 37px 48px 0 43px;
  background: #f2f8f6;
}
.check {
  margin-top: 3px;
  flex: none;
}
.feedback h3 {
  font-size: 24px;
  font-weight: 700;
  line-height: 36px;
  margin-bottom: 12px;
}
.feedback p {
  font-size: 32px;
  line-height: 48px;
}
.scrollbar {
  width: 30px;
  flex: none;
  background: #f8f8f8;
  border-left: 2px solid #e8e8e8;
  padding: 53px 6px 0;
}
.thumb {
  width: 16px;
  height: 100px;
  border-radius: 8px;
  background: #c1c1c1;
}
.win-foot {
  height: 31px;
  flex: none;
  background: linear-gradient(#f0f0f0, #f5f5f5);
  border-top: 2px solid #dedede;
  box-shadow: 0 -8px 18px rgba(0, 0, 0, .03);
}

/* dock */
.dock {
  width: 2414px;
  height: 108px;
  margin: 14px 0 0 73px;
  display: flex;
  padding: 11px 0 0 4px;
  border: 2px solid #38383f;
  border-bottom: 0;
  border-radius: 14px 14px 0 0;
  background: linear-gradient(90deg, #171a28, #191b28 50%, #2b2229);
}
.dock-item {
  width: 89.3px;
  height: 91px;
  flex: none;
  position: relative;
  display: flex;
  justify-content: center;
}
.dock-item svg {
  width: 76px;
  height: 76px;
  flex: none;
}
.dock-item svg.big {
  width: 86px;
  height: 86px;
  margin-top: -5px;
}
.dock-item svg.trash {
  width: 62px;
  height: 78px;
  margin-top: -3px;
}
.dock-item.on::after {
  content: "";
  position: absolute;
  left: 50%;
  bottom: 0;
  width: 8px;
  height: 8px;
  margin-left: -4px;
  border-radius: 50%;
  background: #8f8f96;
}
.badge {
  position: absolute;
  top: -5px;
  left: 56px;
  width: 32px;
  height: 32px;
  border-radius: 50%;
  background: #ef4340;
  color: #fff;
  font-family: Inter, Arial, sans-serif;
  font-size: 21px;
  line-height: 32px;
  text-align: center;
}
.dock-sep {
  width: 40.7px;
  flex: none;
  position: relative;
}
.dock-sep::before {
  content: "";
  position: absolute;
  left: 23px;
  top: 0;
  width: 2px;
  height: 80px;
  background: #5c5a5e;
}
.dock-sep-end {
  width: 42px;
}
.cal-mon, .cal-day, .map-3d, .tv-text, .term-text, .xl-text {
  font-family: Inter, Arial, sans-serif;
}
.cal-mon { font-size: 12px; fill: #fff; text-anchor: middle; }
.cal-day { font-size: 34px; fill: #222; text-anchor: middle; font-weight: 300; }
.map-3d { font-size: 10px; fill: #44586a; text-anchor: middle; }
.tv-text { font-size: 30px; fill: #fff; }
.term-text { font-size: 18px; fill: #eee; }
.xl-text { font-size: 24px; fill: #fff; text-anchor: middle; font-weight: 600; }
```
